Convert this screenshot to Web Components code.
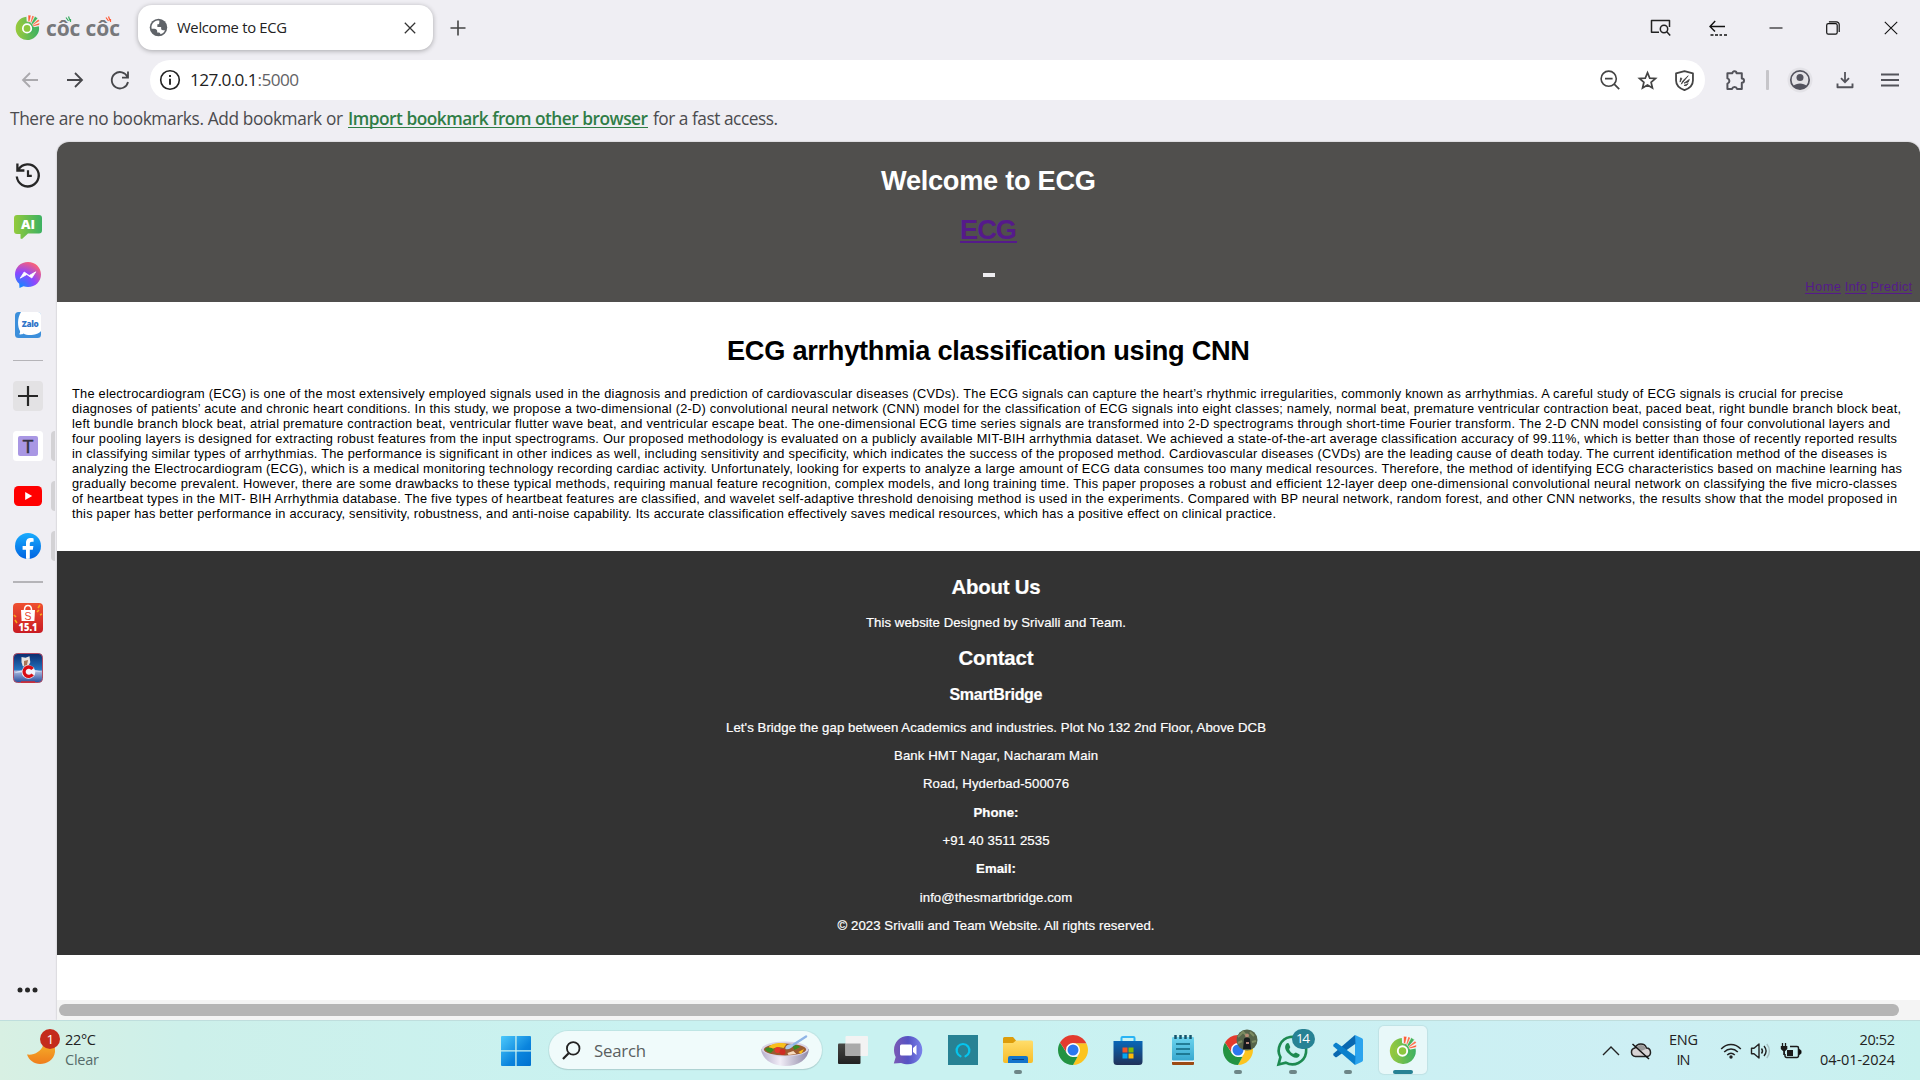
<!DOCTYPE html>
<html lang="en">
<head>
<meta charset="utf-8">
<title>Welcome to ECG</title>
<style>
html,body{margin:0;padding:0;width:1920px;height:1080px;overflow:hidden;background:#efeef3}
</style>
</head>
<body>
<desktop-screen></desktop-screen>
<script>
const ICONS = {
coccoc:['0 0 30 30',`<defs><linearGradient id="g" x1="0" x2="1"><stop offset="0" stop-color="#9bca3c"/><stop offset="1" stop-color="#3cb163"/></linearGradient></defs><path d="M14.500 16 13.800 3A13 13 0 1 0 27.600 13.500z" fill="url(#g)"/><circle cx="14.500" cy="16" r="7.800" fill="url(#g)"/><circle cx="14.500" cy="16" r="4.700" fill="#8cc63f" stroke="#fff" stroke-width="1.900"/><path d="m15.600 1.200 3.400.3-1.700 7.200-1.600-.1zM28.600 9.700l-.5 2.600-6.700 1.500-.5-1.300z" fill="#fb5a34" stroke="#fff" stroke-width=".5"/><path d="m23.300 2.500 3.200 2.300-5.700 6.700-1.700-1.300z" fill="#46b45c" stroke="#fff" stroke-width=".5"/><path d="m20.300 2 1.900.7-2.900 6.500-.9-.3zM27 6.200l1.300 1.600-7 4.200-.4-.7z" fill="#ff7350"/>`],
globe:['0 0 24 24',`<path fill="#5f6368" d="M12 2a10 10 0 1 0 0 20 10 10 0 0 0 0-20z"/><path fill="#fff" d="M10.900 4.100c-3.900.5-6.900 3.800-6.900 7.900 0 .5.1 1 .2 1.500h3.100c1.800 0 3.200 1 3.200 2.800v1.500h1.700c1.600 0 2 1.200 1.800 2 2.400-.7 4.500-2.400 5.400-4.800h-2.200c-1.500 0-2.200-.9-2.200-2v-1.500h-4.300V8.300c1.900 0 2.200-.7 2.200-2.100l.1-1.800c-.6-.2-1.300-.3-2.100-.3z"/>`],
close:['0 0 12 12',`<path d="M.8.8l10.400 10.400M11.200.8.8 11.200" stroke="#333" stroke-width="1.250"/>`],
winclose:['0 0 14 14',`<path d="M.8.8l12.400 12.400M13.200.8.8 13.200" stroke="#111" stroke-width="1.100"/>`],
plus:['0 0 16 16',`<path d="M8 .5v15M.5 8h15" stroke="#444" stroke-width="1.600"/>`],
back:['0 0 18 18',`<path d="M17 9H2M9 2 2 9l7 7" stroke="#aaa9ad" stroke-width="1.800" fill="none"/>`],
fwd:['0 0 18 18',`<path d="M1 9h15M9 2l7 7-7 7" stroke="#47474b" stroke-width="1.800" fill="none"/>`],
reload:['0 0 20 20',`<path d="M17.600 7.200A8.200 8.200 0 1 0 18 12M18 1.600v6h-6" stroke="#47474b" stroke-width="1.800" fill="none"/>`],
info:['0 0 22 22',`<circle cx="11" cy="11" r="9.300" stroke="#222" stroke-width="1.600" fill="none"/><path d="M11 9.800v6M11 6v2" stroke="#222" stroke-width="1.900"/>`],
tabsearch:['0 0 22 18',`<path d="M9 13.300H1.500V1.500h18V6M19.500 1.500V8" fill="none" stroke="#222" stroke-width="1.500" stroke-linejoin="round"/><circle cx="14" cy="10" r="3.700" fill="none" stroke="#222" stroke-width="1.500"/><path d="m16.800 12.800 3.400 3.600" stroke="#222" stroke-width="1.500"/>`],
backdash:['0 0 18 16',`<path d="M16 6.500H1.200M6.200 1 1 6.500 6 11.500" fill="none" stroke="#111" stroke-width="1.400"/><path d="M1.500 15h3M6 15h3M10.500 15h2.500M15 15h3" stroke="#111" stroke-width="1.400"/>`],
min:['0 0 14 14',`<path d="M.5 7h13" stroke="#111" stroke-width="1.100"/>`],
restore:['0 0 14 14',`<rect x=".7" y="2.700" width="10.500" height="10.500" rx="1.600" fill="none" stroke="#111" stroke-width="1.200"/><path d="M2.900 .8h7.500a2.800 2.800 0 0 1 2.800 2.800v7.500" fill="none" stroke="#111" stroke-width="1.200"/>`],
zoomout:['0 0 20 20',`<circle cx="8.700" cy="8.700" r="7.600" fill="none" stroke="#444" stroke-width="1.600"/><path d="M5 8.700h7.600M14.200 14.200l5 5" stroke="#444" stroke-width="1.700"/>`],
star:['0 0 18 18',`<path d="m9 1.600 2.100 5.100 5.500.4-4.200 3.600 1.300 5.400L9 13.200l-4.700 2.900 1.300-5.400-4.200-3.600 5.500-.4z" fill="none" stroke="#444" stroke-width="1.600"/>`],
shield:['0 0 18 20',`<path d="M9 1 17 3.200V10c0 4.500-3.600 7.600-8 9.200C4.600 17.600 1 14.500 1 10V3.200z" fill="none" stroke="#444" stroke-width="1.700" stroke-linejoin="round"/><path d="M5.300 7.500 4.800 11.500 6.500 8zM12.500 5.500 7.200 10.500l-1.200 3zM13.600 9l-5 3.500 4-1zM12.500 13l-4 1.700 2 .2z" fill="#444" stroke="#444" stroke-width=".8"/>`],
puzzle:['0 0 20 20',`<path d="M2.300 3.200H7a2 2 0 1 1 4 0h5V8a2 2 0 1 1 0 4.200V18h-4.500a2.500 2.500 0 0 0-4.800 0H2.300v-5a2.600 2.600 0 0 0 0-5z" fill="none" stroke="#53535a" stroke-width="1.900" stroke-linejoin="round"/>`],
profile:['0 0 26 26',`<circle cx="13" cy="13" r="12.500" fill="#e3e2e7"/><circle cx="13" cy="13" r="9.200" fill="none" stroke="#53535f" stroke-width="1.700"/><circle cx="13" cy="10.500" r="3.500" fill="#53535f"/><path d="M6 19c3.500-3.400 10.500-3.400 14 0-3.500 4-10.500 4-14 0z" fill="#53535f"/>`],
download:['0 0 18 18',`<path d="M9 1v10M5 7.200l4 4 4-4" fill="none" stroke="#53535a" stroke-width="1.800"/><path d="M1.500 12.500v3.700h15v-3.700" fill="none" stroke="#53535a" stroke-width="1.900" stroke-linejoin="round"/>`],
menu:['0 0 18 14',`<path d="M0 1.500h18M0 7h18M0 12.500h18" stroke="#53535a" stroke-width="1.800"/>`],
history:['0 0 28 28',`<path d="M4.500 8.500A11 11 0 1 1 2.800 15.500M3.400 2.500v7h7" fill="none" stroke="#262626" stroke-width="2.300"/><path d="M14 9.300v5.500h3.800" fill="none" stroke="#262626" stroke-width="2.200"/>`],
ai:['0 0 28 24',`<defs><linearGradient id="g"><stop stop-color="#93ca3c"/><stop offset="1" stop-color="#3db162"/></linearGradient></defs><path d="M3 0h22a3 3 0 0 1 3 3v12.500a3 3 0 0 1-3 3H14L8 24l-1.500-.5V19H3a3 3 0 0 1-3-3V3a3 3 0 0 1 3-3z" fill="url(#g)"/><text x="14" y="14" font-family="Open Sans,sans-serif" font-size="13" font-weight="800" text-anchor="middle" fill="#fff">AI</text>`],
messenger:['0 0 26 26',`<defs><radialGradient id="g" cx=".2" cy="1" r="1.100"><stop stop-color="#0a8cff"/><stop offset=".55" stop-color="#8e46ff"/><stop offset="1" stop-color="#ff6370"/></radialGradient></defs><path d="M13 0C5.700 0 0 5.300 0 12.500c0 3.800 1.600 7 4.200 9.300L4.500 26l4-1.700c1.400.4 3 .7 4.500.7 7.300 0 13-5.300 13-12.500S20.300 0 13 0z" fill="url(#g)"/><path d="m5.200 16.200 4-6.200 5 3.500 6.600-3.700-4 6.200-5-3.500z" fill="#fff" stroke="#fff" stroke-linejoin="round" stroke-width=".8"/>`],
zalo:['0 0 26 26',`<rect width="26" height="26" rx="3.500" fill="#3c8fdb"/><path d="M6 0h17a3 3 0 0 1 3 3v16c-3 4-13 5.500-17.500 2.500-1 1-3 1-4.500.8 1.500-1.500 1-2 1-3.300C2.500 15 2 6 6 0z" fill="#fff"/><text x="15.300" y="14.500" font-family="Open Sans,sans-serif" font-size="8.200" font-weight="800" text-anchor="middle" fill="#2f74c8" textLength="17">Zalo</text>`],
bigplus:['0 0 30 30',`<rect width="30" height="30" rx="4" fill="#e3e2e4"/><path d="M15 5v20M5 15h20" stroke="#262626" stroke-width="2.200"/>`],
tbox:['0 0 30 30',`<rect width="30" height="30" rx="3.500" fill="#fff"/><rect x="5" y="5" width="20" height="20" rx="2" fill="#a997e4"/><text x="15" y="21.600" font-family="Liberation Sans,sans-serif" font-size="18" text-anchor="middle" fill="#343241" stroke="#343241" stroke-width=".4">T</text>`],
youtube:['0 0 28 20',`<rect width="28" height="20" rx="4.500" fill="#f00"/><path d="M11.200 6v8l7-4z" fill="#fff"/>`],
facebook:['0 0 26 26',`<defs><linearGradient id="g" x2="0" y2="1"><stop stop-color="#18acfe"/><stop offset="1" stop-color="#0163e0"/></linearGradient></defs><circle cx="13" cy="13" r="13" fill="url(#g)"/><path d="M17.800 16.700l.6-3.700h-3.600v-2.300c0-1.200.6-2 2.100-2h1.700V5.400c-4-.8-7.600-.3-7.600 4.800V13H7.600v3.700H11v9.100c1.200.2 2.500.2 3.800 0v-9.100z" fill="#fff"/>`],
shopee:['0 0 30 30',`<defs><linearGradient id="g" x2="0" y2="1"><stop stop-color="#ef5030"/><stop offset="1" stop-color="#c91b23"/></linearGradient></defs><rect width="30" height="30" rx="4" fill="url(#g)"/><path d="M1 12l2 2M2 17l2 3M24 9l2-2M25 5l2-3M27 12l2-1" stroke="#f9a51b" stroke-width="1.600"/><path d="M8 7h14l-.6 11H8.600z" fill="#fff"/><path d="M11.500 7c0-6 7-6 7 0" fill="none" stroke="#fff" stroke-width="1.500"/><text x="15" y="16.500" text-anchor="middle" font-family="Liberation Sans,sans-serif" font-size="10.500" fill="#e8452c">S</text><text x="15" y="28" text-anchor="middle" font-family="Open Sans,sans-serif" font-size="11" font-weight="800" fill="#fff" textLength="19" lengthAdjust="spacingAndGlyphs">15.1</text>`],
game:['0 0 30 30',`<defs><linearGradient id="g" x2="0" y2="1"><stop stop-color="#0b2c6e"/><stop offset=".55" stop-color="#2371bd"/><stop offset=".62" stop-color="#a9b7dd"/><stop offset="1" stop-color="#244d9d"/></linearGradient></defs><rect x=".5" y=".5" width="29" height="29" rx="4" fill="url(#g)" stroke="#b04a62"/><path d="M1 20c8-4 20-4 28-1-9-1-20 0-28 1z" fill="#d7e2f7"/><path d="m8.500 4 4 .8 4-1.500.8 6-2.500 5-5-1-1.300-4z" fill="#e8e4e1"/><path d="m11 8 4-1-1 5-3 1z" fill="#a87555"/><circle cx="15.500" cy="19" r="6.800" fill="#f2f2fa"/><path d="M19.600 16a4.700 4.700 0 1 0 0 5.400" fill="none" stroke="#d90d15" stroke-width="3.300"/><path d="M8 29h14" stroke="#d32930" stroke-width="1.500"/>`],
dots:['0 0 22 6',`<circle cx="3" cy="3" r="2.500" fill="#262626"/><circle cx="10.500" cy="3" r="2.500" fill="#262626"/><circle cx="18" cy="3" r="2.500" fill="#262626"/>`],
moon:['0 0 28 24',`<defs><linearGradient id="g" x2="0" y2="1"><stop stop-color="#f6b62b"/><stop offset="1" stop-color="#ef7d1c"/></linearGradient></defs><path d="M24 0c3 4 4.500 8 4 12-1 8-8 12-15 12C7 23.600 2 20.500 0 14.500c7 1 14-3 16-9z" fill="url(#g)"/>`],
win:['0 0 30 30',`<defs><linearGradient id="g" x2="1" y2="1"><stop stop-color="#4cc9fb"/><stop offset=".6" stop-color="#0a84dd"/><stop offset="1" stop-color="#0071cf"/></linearGradient></defs><path d="M1 0h13.300v14.300H0V1a1 1 0 0 1 1-1zM15.600 0H29a1 1 0 0 1 1 1v13.300H15.600zM0 15.600h14.300V30H1a1 1 0 0 1-1-1zM15.600 15.600H30V29a1 1 0 0 1-1 1H15.600z" fill="url(#g)"/>`],
search:['0 0 20 20',`<circle cx="11.800" cy="7.800" r="6.600" fill="none" stroke="#222" stroke-width="1.900"/><path d="m7 12.800-6 6.200" stroke="#222" stroke-width="2.300"/>`],
bowl:['0 0 50 31',`<defs><linearGradient id="g" x2="1"><stop stop-color="#b6aecb"/><stop offset=".4" stop-color="#f1edf7"/><stop offset="1" stop-color="#8f88a6"/></linearGradient></defs><path d="M0 14C1 24 11 31 25 31s23-7 24-17z" fill="url(#g)"/><ellipse cx="24.500" cy="14" rx="24" ry="7.500" fill="#d9d3e6"/><ellipse cx="24.500" cy="14.500" rx="21.500" ry="6" fill="#9b5a30"/><path d="M8 12c3-4 13-5 18-3l-3 4c-6-2-9 1-14 1z" fill="#f8bf1b"/><path d="M4 14c3-2 7-2 9 1l-3 3c-3-1-5-2-6-4zM32 11c3-1 6-1 8 1l-6 3z" fill="#3b8b22"/><path d="m38 17 6-3-3 5z" fill="#f8bf1b"/><circle cx="17" cy="15" r="3" fill="#e2382a"/><circle cx="22" cy="17" r="3" fill="#cf2c22"/><path d="m27 18 6-2 3 3-8 1z" fill="#f7dcc0"/><path d="M46 1.500 31 11" stroke="#8fb4e6" stroke-width="2.400" stroke-linecap="round"/><path d="M31 9c-4 0-7 3-6 5 3 1 7-1 8-4z" fill="#a9c6ec"/>`],
taskview:['0 0 30 28',`<defs><linearGradient id="g" x2="0" y2="1"><stop stop-color="#474744"/><stop offset="1" stop-color="#222"/></linearGradient></defs><rect y="7.500" width="22.500" height="20.500" rx="1" fill="url(#g)"/><rect x="7.500" width="22.500" height="20" rx="1" fill="#f3f3f3"/><path d="M7.500 7.500h15V20h-15z" fill="#aaa"/>`],
chat:['0 0 30 30',`<defs><linearGradient id="g" x1="0" x2="1"><stop stop-color="#7b5ab5"/><stop offset=".5" stop-color="#5653c4"/><stop offset="1" stop-color="#7a83eb"/></linearGradient></defs><path d="M15 1C7 1 1 7 1 15c0 3 .8 5 1.700 7L.8 28.500 8 28c2 1 4.500 1.300 7 1.300 8 0 14.300-6.300 14.300-14.300S23 1 15 1z" fill="url(#g)"/><rect x="7" y="9.500" width="12" height="11" rx="1.500" fill="#fff"/><path d="m20 13 3.500-3v10L20 17z" fill="#fff"/>`],
alexa:['0 0 30 30',`<path d="M0 0h30v30H0z" fill="#278294"/><path d="M12.500 21.300a6.400 6.400 0 1 1 5 0" fill="none" stroke="#05c5ee" stroke-width="2.200" stroke-linecap="round"/>`],
folder:['0 0 30 30',`<defs><linearGradient id="g" x2="0" y2="1"><stop stop-color="#ffdd6b"/><stop offset="1" stop-color="#f8bd28"/></linearGradient></defs><path d="M0 3.500A1.500 1.500 0 0 1 1.500 2H10l3 3.500V9H0z" fill="#dd9d0b"/><path d="M0 8h10l3-2.500h15.500A1.500 1.500 0 0 1 30 7v19a2 2 0 0 1-2 2H2a2 2 0 0 1-2-2z" fill="url(#g)"/><path d="M5 28v-5a2 2 0 0 1 2-2h16a2 2 0 0 1 2 2v5z" fill="#1374cb"/><path d="M9 24.500h12" stroke="#0a407f"/>`],
chrome:['0 0 48 48',`<path d="M24 13h21.300C47 16 48 20 48 24c0 13-11 24-24 24l9.500-18.500z" fill="#fcc41f"/><path d="M3.200 12 14.500 29.500 24 35h7L24 48C10 48 0 37 0 24c0-4.500 1.200-8.500 3.200-12z" fill="#229342"/><path d="M3.200 12C7.500 4.800 15 0 24 0c9 0 17 5 21.300 13H24L14 18.500l-.5 9z" fill="#e33b2e"/><circle cx="24" cy="24" r="11.200" fill="#fff"/><circle cx="24" cy="24" r="8.800" fill="#2c78ef"/>`],
store:['0 0 30 30',`<defs><linearGradient id="g" x2="0" y2="1"><stop stop-color="#0867b8"/><stop offset="1" stop-color="#213259"/></linearGradient></defs><path d="M8.500 7V3a1 1 0 0 1 1-1h11a1 1 0 0 1 1 1v4" fill="none" stroke="#29b4f4" stroke-width="2"/><path d="M.5 6h29v20.500a3.500 3.500 0 0 1-3.500 3.500H4a3.500 3.500 0 0 1-3.500-3.500z" fill="url(#g)"/><path d="M9.500 12.500h5v5h-5z" fill="#f35426"/><path d="M15.500 12.500h5v5h-5z" fill="#81bc06"/><path d="M9.500 18.500h5v5h-5z" fill="#05a6f0"/><path d="M15.500 18.500h5v5h-5z" fill="#ffba08"/>`],
notepad:['0 0 22 30',`<defs><linearGradient id="g" x2="0" y2="1"><stop stop-color="#6cd4ee"/><stop offset="1" stop-color="#38a8cf"/></linearGradient></defs><path d="M0 27h22v2a1 1 0 0 1-1 1H1a1 1 0 0 1-1-1z" fill="#9c4a14"/><path d="M0 24.500h22V27H0z" fill="#f1f1f1"/><rect y="2" width="22" height="23.500" rx="1" fill="url(#g)"/><path d="M3.500 0v4M8.500 0v4M13.500 0v4M18.500 0v4" stroke="#17546c" stroke-width="2.500"/><path d="M4 9h14M4 14h14M4 19h14" stroke="#11657e" stroke-width="1.700"/>`],
whatsapp:['0 0 30 30',`<path d="M1.500 28.500 3.300 21.500A13.300 13.300 0 1 1 8.500 26.700z" fill="none" stroke="#1d8a51" stroke-width="2.600"/><path d="M9 8.500c1-1 2-1 2.600 0l1.200 3c.3.700-1.300 1.700-1 2.500.8 2 2.200 3.500 4.200 4.200.8.300 1.700-1.500 2.600-1.100l3 1.500c1 .6 0 2.500-1.500 3.200-3 1-6-.8-9-3.800s-4.400-6.500-2.100-9.500z" fill="#1d8a51"/>`],
photo:['0 0 22 22',`<circle cx="11" cy="11" r="10.500" fill="#56644a"/><path d="M2 8l5-5 3 3M14 3l4 4M2 14l4-2M16 13l4-1" stroke="#7d8c62" stroke-width="2" fill="none"/><circle cx="11" cy="6.500" r="2" fill="#b78d75"/><path d="M8 10c1-2 5-2 6 0l1 10H7z" fill="#17191d"/><path d="M10 13h3v2h-3z" fill="#b9857a"/>`],
vscode:['0 0 30 30',`<path d="M22 0v30l7-3.300a1.800 1.800 0 0 0 1-1.700V5a1.800 1.800 0 0 0-1-1.700z" fill="#2ba4ee"/><path d="M22 0 .6 18.600a1.300 1.300 0 0 0 0 1.800l1.600 1.500c.5.400 1.200.4 1.700.1L22.500 8.700z" fill="#0a68b0"/><path d="M22 30 .6 11.400a1.300 1.300 0 0 1 0-1.800l1.600-1.500c.5-.4 1.200-.4 1.700-.1l18.600 13.300z" fill="#0b80cc"/>`],
chev:['0 0 18 10',`<path d="m1 9 8-8 8 8" fill="none" stroke="#222" stroke-width="1.400"/>`],
cloud:['0 0 22 18',`<path d="M5.500 14.500a4.300 4.300 0 0 1-.6-8.500C7 1 14.500.5 16.500 6c5 0 5.500 8.500.5 8.500z" fill="#d7d3d4" stroke="#222" stroke-width="1.500"/><path d="M6 5.500c3-4 8.500-3 10 1.500l-5 2z" fill="#999"/><path d="m2.500 2 16.500 15" stroke="#111" stroke-width="1.500"/>`],
wifi:['0 0 22 16',`<path d="M1.200 6c5.500-6 14-6 19.600 0M4.200 9c4-4 9.600-4 13.600 0M7.200 12c2.300-2.200 5.300-2.200 7.600 0" fill="none" stroke="#222" stroke-width="1.500"/><circle cx="11" cy="14" r="1.700" fill="#222"/>`],
speaker:['0 0 22 18',`<path d="M1.500 6.200H4l5-4.200v14L4 11.800H1.500z" fill="none" stroke="#222" stroke-width="1.400" stroke-linejoin="round"/><path d="M11.500 6.500c1.200 1.500 1.200 3.500 0 5M14 4c2.500 3 2.500 7 0 10" fill="none" stroke="#222" stroke-width="1.400"/><path d="M16.800 2c3.500 4.200 3.500 9.800 0 14" fill="none" stroke="#a5bfc1" stroke-width="1.400"/>`],
battery:['0 0 22 18',`<path d="M10 4.500h7a1.500 1.500 0 0 1 1.500 1.500v8a1.500 1.500 0 0 1-1.500 1.500H6.500A1.500 1.500 0 0 1 5 14v-2" fill="none" stroke="#1a1a1a" stroke-width="1.500"/><path d="M7 8h6v6H7z" fill="#1a1a1a"/><path d="M19 7.500l2 1v3l-2 1z" stroke="#1a1a1a"/><path d="M2.500 1v4M5.500 1v4" stroke="#1a1a1a" stroke-width="1.300"/><path d="M.8 4h6.500v3L5 9.200V13H3.200V9.200L.8 7z" fill="#1a1a1a"/>`],
accents:['0 0 50 8',`<path d="m1 1.500 2.500 3.500M3.500.5l1.500 4M5.500 3v3" stroke="#37ad60" stroke-width="1.200"/><path d="m41 1.500 2.500 3.500M43.500.5l1.500 4M45.500 3v3" stroke="#ff5a36" stroke-width="1.200"/>`]
};
const make = (tag, html) => {
  const tpl = document.createElement('template');
  tpl.innerHTML = html;
  customElements.define(tag, class extends HTMLElement {
    constructor(){ super(); this.attachShadow({mode:'open'}).append(tpl.content.cloneNode(true)); }
  });
};
const ic = (n,w,h,st='') => `<ui-icon name="${n}" w="${w}" h="${h||w}" style="${st}"></ui-icon>`;
/* t: text run laid out to a known advance width */
const t = (s,w,fs,lh,st='') => `<text-run w="${w}" style="font-size:${fs}px;line-height:${lh}px;${st}">${s}</text-run>`;

make('desktop-screen', `<style>:host{display:flex;flex-direction:column;width:1920px;height:1080px;background:#efeef3;font-family:"Open Sans","Noto Sans",sans-serif;color:#222}
.mid{display:flex;height:878px}</style>
<tab-strip></tab-strip><nav-bar></nav-bar><bookmark-bar></bookmark-bar>
<div class="mid"><side-bar></side-bar><web-view></web-view></div><task-bar></task-bar>`);

make('tab-strip', `<style>:host{display:flex;height:55px;align-items:center;box-sizing:border-box}
.logo{display:flex;width:138px;padding-left:14px;box-sizing:border-box;align-items:center;gap:5px;position:relative;height:55px}
.acc{position:absolute;left:65px;top:16px}
.tab{display:flex;align-items:center;width:295px;height:45px;background:#fff;border-radius:14px;box-shadow:0 1px 5px #0000004d;padding:0 17px 0 10px;box-sizing:border-box}
.sp{flex:1}.ctl{display:flex;align-items:center}</style>
<div class="logo">${ic('coccoc',27)}${t('côc côc',74,21,30,'color:#77787b;font-weight:700;margin-top:1px')}<div class="acc">${ic('accents',50,8)}</div></div>
<div class="tab">${ic('globe',21,21,'margin-right:8px')}${t('Welcome to ECG',110,14.8,22,'color:#222;margin-top:-2px')}<span class="sp"></span>${ic('close',12)}</div>
${ic('plus',16,16,'margin-left:16.500px')}<span class="sp"></span>
<div class="ctl">${ic('tabsearch',22,18,'margin-right:37px')}${ic('backdash',18,16,'margin-right:42px')}${ic('min',14,14,'margin-right:43px')}${ic('restore',14,14,'margin-right:44px')}${ic('winclose',14,14,'margin-right:22px')}</div>`);

make('nav-bar', `<style>:host{display:flex;height:50px;align-items:center}
.nav{display:flex;width:150px;padding-left:21px;box-sizing:border-box;gap:27px;align-items:center}
.omni{display:flex;align-items:center;width:1555px;height:40px;border-radius:20px;background:#fff;padding:0 10px 0 9px;box-sizing:border-box}
.sp{flex:1}.r{display:flex;align-items:center}.sep{width:2.500px;height:20px;background:#c6c5c9;border-radius:1px;margin:0 20px 0 20px}</style>
<div class="nav">${ic('back',18)}${ic('fwd',18)}${ic('reload',20,20,'margin-left:-1px')}</div>
<div class="omni">${ic('info',22,22,'margin-right:9px')}${t('127.0.0.1',67.5,17.2,26,'color:#222')}${t(':5000',41.5,17.2,26,'color:#636366')}<span class="sp"></span>${ic('zoomout',20,20,'margin-right:18px')}${ic('star',19,19,'margin-right:18px')}${ic('shield',19,21,'margin-right:1px')}</div>
<div class="r">${ic('puzzle',21,21,'margin-left:20px')}<span class="sep"></span>${ic('profile',26,26,'margin-right:23px;margin-left:-2px')}${ic('download',18,18,'margin-right:27px')}${ic('menu',18,14)}</div>`);

make('bookmark-bar', `<style>:host{display:flex;height:37px;padding-left:10px;color:#4b4b4e;align-items:flex-start;padding-top:1px;box-sizing:border-box}a{color:#2f7d46;text-decoration:none;margin:0 5px;border-bottom:1.500px solid #2f7d46;height:21px}</style>
${t('There are no bookmarks. Add bookmark or',333,17.3,26)}<a>${t('Import bookmark from other browser',300,17.3,26,'font-weight:600')}</a>${t('for a fast access.',125,17.3,26)}`);

make('side-bar', `<style>:host{display:flex;flex-direction:column;width:57px;box-sizing:border-box;padding-top:8px;height:878px}
.c{height:50px;display:flex;align-items:center;justify-content:center;width:56px;position:relative}
.d{height:21px;display:flex;align-items:center;justify-content:center;width:56px}.d i{width:30px;height:1.500px;background:#b5b4b8}
.h::after{content:"";position:absolute;right:1px;top:10px;width:4px;height:30px;background:#d3d2d5;border-radius:4px 0 0 4px}.sp{flex:1}</style>
<div class="c">${ic('history',28)}</div><div class="c">${ic('ai',28,24,'margin-top:3px')}</div><div class="c">${ic('messenger',26)}</div><div class="c">${ic('zalo',26)}</div>
<div class="d"><i></i></div><div class="c">${ic('bigplus',30)}</div><div class="c h">${ic('tbox',30)}</div><div class="c h">${ic('youtube',28,20)}</div><div class="c h">${ic('facebook',26)}</div>
<div class="d" style="height:22px"><i></i></div><div class="c">${ic('shopee',30)}</div><div class="c">${ic('game',30)}</div><span class="sp"></span><div class="c" style="margin-bottom:5px">${ic('dots',22,6)}</div>`);

const P=[["The electrocardiogram (ECG) is one of the most extensively employed signals used in the diagnosis and prediction of cardiovascular diseases (CVDs). The ECG signals can capture the heart’s rhythmic irregularities, commonly known as arrhythmias. A careful study of ECG signals is crucial for precise",1771],
["diagnoses of patients’ acute and chronic heart conditions. In this study, we propose a two-dimensional (2-D) convolutional neural network (CNN) model for the classification of ECG signals into eight classes; namely, normal beat, premature ventricular contraction beat, paced beat, right bundle branch block beat,",1829],
["left bundle branch block beat, atrial premature contraction beat, ventricular flutter wave beat, and ventricular escape beat. The one-dimensional ECG time series signals are transformed into 2-D spectrograms through short-time Fourier transform. The 2-D CNN model consisting of four convolutional layers and",1818],
["four pooling layers is designed for extracting robust features from the input spectrograms. Our proposed methodology is evaluated on a publicly available MIT-BIH arrhythmia dataset. We achieved a state-of-the-art average classification accuracy of 99.11%, which is better than those of recently reported results",1825],
["in classifying similar types of arrhythmias. The performance is significant in other indices as well, including sensitivity and specificity, which indicates the success of the proposed method. Cardiovascular diseases (CVDs) are the leading cause of death today. The current identification method of the diseases is",1815],
["analyzing the Electrocardiogram (ECG), which is a medical monitoring technology recording cardiac activity. Unfortunately, looking for experts to analyze a large amount of ECG data consumes too many medical resources. Therefore, the method of identifying ECG characteristics based on machine learning has",1830],
["gradually become prevalent. However, there are some drawbacks to these typical methods, requiring manual feature recognition, complex models, and long training time. This paper proposes a robust and efficient 12-layer deep one-dimensional convolutional neural network on classifying the five micro-classes",1825],
["of heartbeat types in the MIT- BIH Arrhythmia database. The five types of heartbeat features are classified, and wavelet self-adaptive threshold denoising method is used in the experiments. Compared with BP neural network, random forest, and other CNN networks, the results show that the model proposed in",1825],
["this paper has better performance in accuracy, sensitivity, robustness, and anti-noise capability. Its accurate classification effectively saves medical resources, which has a positive effect on clinical practice.",1204]];
make('web-view', `<style>:host{display:flex;flex-direction:column;width:1863px;height:878px;background:#fff;border-radius:12px 12px 0 0;overflow:hidden;font-family:"Liberation Sans",Arial,sans-serif;box-shadow:0 0 2px #0004}</style>
<page-header></page-header><page-article></page-article><page-footer></page-footer><scroll-track></scroll-track>`);
make('page-header', `<style>:host{display:flex;flex-direction:column;align-items:center;height:160px;background:#504f4d;padding-top:23px;box-sizing:border-box;color:#fff;font-weight:700;flex:none}
a{color:#551a8b;text-decoration:none}.dash{width:12px;height:4px;background:#eeedf0;margin-top:30px}
.t{position:relative;left:-1px}
nav{display:flex;gap:3.700px;align-self:flex-end;margin:2px 8px 0 0;font-weight:400}nav a{border-bottom:1px solid #551a8b;height:14px}
.e{border-bottom:2px solid #551a8b;height:27px;margin-top:17px}</style>
${t('Welcome to ECG',215,27.2,32)}<a class="e">${t('ECG',57,27.2,32)}</a><div class="dash"></div>
<nav><a>${t('Home',35.6,12.8,15)}</a><a>${t('Info',22.2,12.8,15)}</a><a>${t('Predict',41.5,12.8,15)}</a></nav>`);
make('page-article', `<style>:host{display:flex;flex-direction:column;height:249px;flex:none;padding:33px 15px 0;box-sizing:border-box;color:#000}
.h{align-self:center;font-weight:700;margin-bottom:19px}</style>
<div class="h">${t('ECG arrhythmia classification using CNN',523,27.2,32)}</div>${P.map(p=>t(p[0],p[1],12.8,15)).join('')}`);
make('page-footer', `<style>:host{display:flex;flex-direction:column;align-items:center;height:404px;flex:none;box-sizing:border-box;padding:22px 0 0 15px;background:#333;color:#fff}b{display:block}text-run{-webkit-text-stroke:.2px #fff}</style>
<b>${t('About Us',89,20.4,28)}</b>${t('This website Designed by Srivalli and Team.',260,13.2,28,'margin-top:8px')}
<b style="margin-top:7px">${t('Contact',75,20.4,28)}</b><b style="margin-top:8.500px">${t('SmartBridge',93,16,28)}</b>
${t("Let's Bridge the gap between Academics and industries. Plot No 132 2nd Floor, Above DCB",540,13.2,28.35,'margin-top:5px')}
${t('Bank HMT Nagar, Nacharam Main',204,13.2,28.35)}${t('Road, Hyderbad-500076',146,13.2,28.35)}<b>${t('Phone:',45,13.2,28.35)}</b>${t('+91 40 3511 2535',107,13.2,28.35)}<b>${t('Email:',40,13.2,28.35)}</b>${t('info@thesmartbridge.com',152.5,13.2,28.35)}${t('© 2023 Srivalli and Team Website. All rights reserved.',317,13.2,28.35)}`);
make('scroll-track', `<style>:host{display:flex;margin-top:auto;height:20px;background:#f4f4f4;padding:4px 21px 4px 2px;box-sizing:border-box}i{flex:1;background:#b5b5b5;border-radius:6px}</style><i></i>`);

make('app-cell', `<style>:host{display:flex;width:55px;height:60px;align-items:center;justify-content:center;position:relative;flex:none}
:host([active])::before{content:"";position:absolute;left:3px;top:6px;width:48px;height:48px;border-radius:5px;background:#e8f8f9;box-shadow:0 0 1px 1px #0000000f}
:host([run])::after{content:"";position:absolute;left:23.500px;bottom:6px;width:8px;height:4px;border-radius:2px;background:#6d8687}
:host([active])::after{content:"";position:absolute;left:17.500px;bottom:6px;width:20px;height:4px;border-radius:2px;background:#278294}
.b{position:absolute;right:3px;top:9px}::slotted(ui-icon){position:relative;left:-.5px}</style><slot></slot><div class="b"><slot name="badge"></slot></div>`);
make('task-bar', `<style>:host{display:flex;height:60px;box-sizing:border-box;border-top:1px solid #bfdedd;background:linear-gradient(90deg,#d8f0e3 0,#cdf0ea 180px,#c9f2f1 640px,#c9f2f1 1000px,#cdeff4 1650px,#c8f1ee);color:#222}
.w{display:flex;width:501px;box-sizing:border-box;padding-left:27px;position:relative}.m{padding-top:19px;width:38px}.bd{position:absolute;left:40px;top:8px;width:20px;height:20px;border-radius:50%;background:#c42b1c;color:#fff;display:flex;justify-content:center}
.wt{padding-top:8px}.s{display:flex;align-items:center;width:273px;height:38px;margin:10px 3.500px 0 18px;background:#f0fbfb;border-radius:19px;box-shadow:0 0 0 1px #b7dcdc99,0 1px 1px #0003;padding:0 12px 0 13px;box-sizing:border-box}
.st{display:flex;align-items:center;height:59px}.apps{display:flex;margin-top:-1px}.tray{display:flex;align-items:center;margin-left:auto;padding-right:25px}
.col{display:flex;flex-direction:column;align-items:center}.sp{flex:1}</style>
<div class="w"><div class="m">${ic('moon',28,24)}</div><div class="bd">${t('1',7,13.5,20)}</div><div class="wt">${t('22°C',31,14.5,21)}${t('Clear',34,14.5,20,'color:#566b6a')}</div></div>
<div class="st">${ic('win',30)}</div>
<div class="s">${ic('search',19)}${t('Search',52,16.8,24,'margin-left:13px;color:#5a5f60;margin-top:1px')}<span class="sp"></span>${ic('bowl',49,31)}</div>
<div class="apps"><app-cell>${ic('taskview',30,28)}</app-cell><app-cell>${ic('chat',30)}</app-cell><app-cell>${ic('alexa',30)}</app-cell><app-cell run>${ic('folder',30)}</app-cell><app-cell>${ic('chrome',30)}</app-cell><app-cell>${ic('store',30)}</app-cell><app-cell>${ic('notepad',22,30)}</app-cell>
<app-cell run>${ic('chrome',30)}<ui-icon name="photo" w="22" h="22" slot="badge" style="margin-right:4px"></ui-icon></app-cell><app-cell run>${ic('whatsapp',31)}<div slot="badge" style="background:#278294;color:#fff;width:23px;height:20px;border-radius:10px;display:flex;justify-content:center;margin-right:3px">${t('14',14,13.5,19)}</div></app-cell><app-cell run>${ic('vscode',30)}</app-cell><app-cell active>${ic('coccoc',30)}</app-cell></div>
<div class="tray">${ic('chev',18,10,'margin-right:10px')}${ic('cloud',22,18,'margin-right:17px')}<div class="col" style="margin:-1px 22px 0 0">${t('ENG',29,14.5,20)}${t('IN',14,14.5,20)}</div>${ic('wifi',22,16,'margin-right:8px')}${ic('speaker',22,18,'margin-right:8px')}${ic('battery',22,18,'margin-right:18px')}<div class="col" style="align-items:flex-end;margin-top:-2px">${t('20:52',35.5,14.5,20)}${t('04-01-2024',75,14.5,20)}</div></div>`);

customElements.define('ui-icon', class extends HTMLElement {
  connectedCallback(){
    if (this.shadowRoot) return;
    const [vb, body] = ICONS[this.getAttribute('name')], w=this.getAttribute('w'), h=this.getAttribute('h');
    this.attachShadow({mode:'open'}).innerHTML = `<style>:host{display:block;flex:none;width:${w}px;height:${h}px}svg{display:block;overflow:visible}</style><svg width="${w}" height="${h}" viewBox="${vb}" preserveAspectRatio="none">${body}</svg>`;
  }
});
customElements.define('text-run', class extends HTMLElement {
  connectedCallback(){
    if (this.shadowRoot) return;
    this.attachShadow({mode:'open'}).innerHTML = `<style>:host{display:block;flex:none;white-space:nowrap}span{display:inline-block;vertical-align:top}</style><span><slot></slot></span>`;
    const w = +this.getAttribute('w'), s = this.shadowRoot.querySelector('span');
    this.style.width = w + 'px';
    const n = [...this.textContent].length;
    const nat = s.getBoundingClientRect().width;
    if (n > 1) s.style.letterSpacing = ((w - nat) / (n - 1)).toFixed(4) + 'px';
  }
});
</script>
</body>
</html>
